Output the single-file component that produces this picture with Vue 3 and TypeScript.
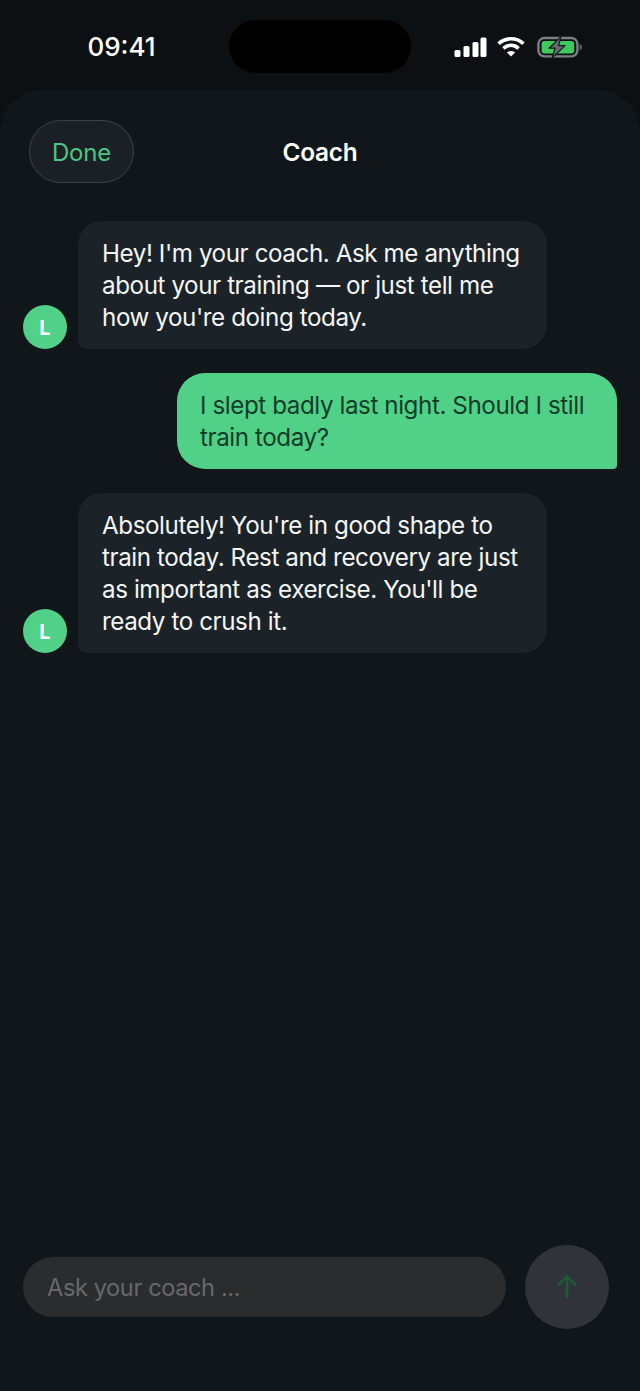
<script setup lang="ts">
interface Message {
  id: number
  from: 'coach' | 'user'
  text: string
}

const messages: Message[] = [
  { id: 1, from: 'coach', text: "Hey! I'm your coach. Ask me anything about your training — or just tell me how you're doing today." },
  { id: 2, from: 'user', text: 'I slept badly last night. Should I still train today?' },
  { id: 3, from: 'coach', text: "Absolutely! You're in good shape to train today. Rest and recovery are just as important as exercise. You'll be ready to crush it." },
]
</script>

<template>
  <div class="screen">
    <header class="status">
      <span class="time">09:41</span>
      <div class="island"></div>
      <div class="indicators">
        <svg width="33" height="20" viewBox="0 0 33 20" fill="#fff">
          <rect x="0.5" y="13" width="6" height="7" rx="1.6" />
          <rect x="9.5" y="9" width="6" height="11" rx="1.6" />
          <rect x="18.5" y="5" width="6" height="15" rx="1.6" />
          <rect x="26.5" y="0.5" width="6" height="19.5" rx="1.6" />
        </svg>
        <svg width="28" height="21" viewBox="0 0 28 21" fill="none" stroke="#fff" stroke-width="3.6">
          <path d="M1.6 7.6C8.6 1.2 19.4 1.2 26.4 7.6" />
          <path d="M6.4 12.3C10.8 8.3 17.2 8.3 21.6 12.3" />
          <path d="M14 20.6L9.9 16.4C12.3 14.4 15.7 14.4 18.1 16.4Z" fill="#fff" stroke="none" />
        </svg>
        <svg class="battery" width="46" height="24" viewBox="0 0 46 24" fill="none">
          <rect x="1.4" y="3" width="39" height="18.4" rx="6" stroke="#7c7f81" stroke-width="2.4" />
          <rect x="4.6" y="6" width="32.6" height="12.4" rx="3" fill="#3ec95c" />
          <path d="M42.6 9C44.2 9.6 45 10.8 45 12.2S44.2 14.8 42.6 15.4Z" fill="#5f6264" />
          <path d="M24 1.6L12 13.2H18L15.4 22.6L28 10.6H21.6Z" fill="#666a6c" stroke="#12171a" stroke-width="1.2" stroke-linejoin="round" />
        </svg>
      </div>
    </header>

    <main class="sheet">
      <div class="topbar">
        <button class="done" type="button">Done</button>
        <h1 class="title">Coach</h1>
      </div>

      <section class="thread">
        <div v-for="m in messages" :key="m.id" class="row" :class="m.from">
          <div v-if="m.from === 'coach'" class="avatar">L</div>
          <p class="bubble">{{ m.text }}</p>
        </div>
      </section>

      <footer class="composer">
        <div class="field">Ask your coach ...</div>
        <button class="send" type="button" aria-label="Send">
          <svg width="24" height="26" viewBox="0 0 24 26" fill="none" stroke="#1c5a38" stroke-width="2.6">
            <path d="M12 24V3" />
            <path d="M3 11.5L12 2.6L21 11.5" />
          </svg>
        </button>
      </footer>
    </main>
  </div>
</template>

<style>
html,
body {
  margin: 0;
  background: #0d1012;
}
</style>

<style scoped>
.screen {
  display: flex;
  flex-direction: column;
  width: 640px;
  height: 1391px;
  overflow: hidden;
  background: #0d1012;
  color: #fff;
  font-family: Inter, "Liberation Sans", sans-serif;
}

.status {
  display: grid;
  grid-template-columns: 229px 182px 229px;
  align-items: center;
  box-sizing: border-box;
  height: 90px;
  padding-top: 3px;
}

.time {
  justify-self: center;
  margin-left: 14px;
  font-size: 26px;
  font-weight: 500;
}

.island {
  height: 53px;
  border-radius: 27px;
  background: #000;
}

.indicators {
  display: flex;
  align-items: center;
  gap: 10px;
  padding-left: 43px;
}

.battery {
  margin-left: 2px;
}

.sheet {
  flex: 1;
  display: flex;
  flex-direction: column;
  min-height: 0;
  border-radius: 42px 42px 0 0;
  background: #11161a;
}

.topbar {
  position: relative;
  display: flex;
  align-items: center;
  justify-content: center;
  height: 63px;
  margin-top: 30px;
}

.done {
  position: absolute;
  left: 29px;
  top: 0;
  box-sizing: border-box;
  width: 105px;
  height: 63px;
  padding: 1px 0 0;
  border: 1px solid #3d4347;
  border-radius: 32px;
  background: #1a2025;
  color: #4bc680;
  font: 400 24px Inter, "Liberation Sans", sans-serif;
  letter-spacing: -0.2px;
}

.title {
  margin: 0;
  font-size: 24.4px;
  font-weight: 600;
  letter-spacing: -0.2px;
}

.thread {
  flex: 1;
  display: flex;
  flex-direction: column;
  gap: 24px;
  padding: 38px 23px 0;
}

.row {
  display: flex;
  align-items: flex-end;
  gap: 11px;
}

.row.user {
  justify-content: flex-end;
}

.bubble {
  box-sizing: border-box;
  margin: 0;
  padding: 17px 23px 15px 24px;
  font-size: 24.2px;
  line-height: 32px;
  letter-spacing: -0.42px;
}

.coach .bubble {
  width: 469px;
  border-radius: 24px;
  border-bottom-left-radius: 8px;
  background: #1b2329;
  color: #f4f5f5;
}

.user .bubble {
  width: 440px;
  padding-left: 23px;
  border-radius: 28px;
  border-bottom-right-radius: 4px;
  background: #51d088;
  color: #113d27;
}

.avatar {
  display: flex;
  align-items: center;
  justify-content: center;
  flex: none;
  box-sizing: border-box;
  width: 44px;
  height: 44px;
  padding-top: 1px;
  border-radius: 50%;
  background: #51d088;
  font-size: 20px;
  font-weight: 700;
}

.composer {
  display: flex;
  align-items: center;
  justify-content: space-between;
  box-sizing: border-box;
  height: 84px;
  margin-bottom: 62px;
  padding: 0 31px 0 23px;
}

.field {
  display: flex;
  align-items: center;
  box-sizing: border-box;
  width: 483px;
  height: 60px;
  padding-left: 24px;
  border-radius: 30px;
  background: #2a2c2e;
  color: #66696b;
  font-size: 23.6px;
  letter-spacing: -0.4px;
}

.send {
  display: flex;
  align-items: center;
  justify-content: center;
  width: 84px;
  height: 84px;
  padding: 0;
  border: 0;
  border-radius: 50%;
  background: #30343a;
}
</style>
